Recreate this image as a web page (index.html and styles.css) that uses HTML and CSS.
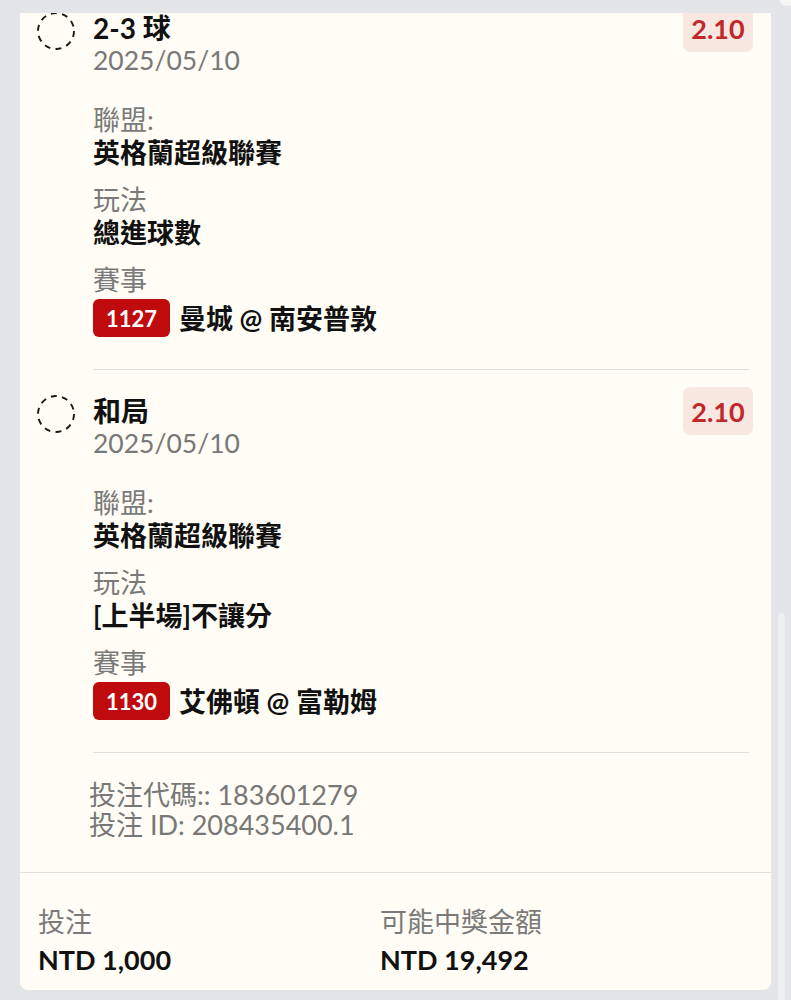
FILE: index.html
```html
<!DOCTYPE html>
<html lang="zh-Hant">
<head>
<meta charset="utf-8">
<title>投注單</title>
<link rel="stylesheet" href="styles.css">
</head>
<body>
<div class="page">
  <div class="card">
    <div class="list">
      <div class="item">
        <svg class="check" width="38" height="38" viewBox="0 0 38 38"><circle cx="19" cy="19" r="18" fill="none" stroke="#1a1a1a" stroke-width="1.9" stroke-dasharray="6 5.3"/></svg>
        <div class="head">
          <div class="title">2-3 球</div>
          <div class="date">2025/05/10</div>
        </div>
        <div class="odds">2.10</div>
        <div class="details">
          <div class="field"><div class="label">聯盟:</div><div class="value">英格蘭超級聯賽</div></div>
          <div class="field"><div class="label">玩法</div><div class="value">總進球數</div></div>
          <div class="field"><div class="label">賽事</div><div class="match"><span class="code">1127</span><span class="value">曼城 @ 南安普敦</span></div></div>
        </div>
      </div>
      <div class="item">
        <svg class="check" width="38" height="38" viewBox="0 0 38 38"><circle cx="19" cy="19" r="18" fill="none" stroke="#1a1a1a" stroke-width="1.9" stroke-dasharray="6 5.3"/></svg>
        <div class="head">
          <div class="title">和局</div>
          <div class="date">2025/05/10</div>
        </div>
        <div class="odds">2.10</div>
        <div class="details">
          <div class="field"><div class="label">聯盟:</div><div class="value">英格蘭超級聯賽</div></div>
          <div class="field"><div class="label">玩法</div><div class="value">[上半場]不讓分</div></div>
          <div class="field"><div class="label">賽事</div><div class="match"><span class="code">1130</span><span class="value">艾佛頓 @ 富勒姆</span></div></div>
        </div>
      </div>
    </div>
    <div class="meta">
      <div class="meta-line">投注代碼:: 183601279</div>
      <div class="meta-line">投注 ID: 208435400.1</div>
    </div>
    <div class="footer">
      <div class="sum">
        <div class="sum-label">投注</div>
        <div class="sum-value">NTD 1,000</div>
      </div>
      <div class="sum">
        <div class="sum-label">可能中獎金額</div>
        <div class="sum-value">NTD 19,492</div>
      </div>
    </div>
  </div>
  <div class="thumb-top"></div>
  <div class="thumb"></div>
</div>
</body>
</html>
```

FILE: styles.css
```css
html, body {
  margin: 0;
  padding: 0;
  background: #e4e5e8;
  height: 1000px;
  overflow: hidden;
}

.page {
  font-family: Lato, "Noto Sans CJK TC", sans-serif;
  font-size: 27px;
  color: #121212;
  padding-top: 13px;
  padding-left: 20px;
}

.card {
  width: 751px;
  background: #fffdf5;
  border-radius: 0 0 8px 8px;
  overflow: hidden;
}

.list {
  margin-top: -26px;
}

.item {
  display: grid;
  grid-template-columns: 38px 1fr auto;
  column-gap: 18px;
  padding: 17px 18px 0 17px;
}

.check {
  display: block;
  margin-top: 8px;
}

.head {
  padding-top: 9px;
}

.title {
  font-size: 28px;
  font-weight: 700;
  line-height: 31px;
  color: #111;
}

.date {
  font-size: 26.5px;
  line-height: 33px;
  color: #787878;
}

.odds {
  width: 70px;
  height: 48px;
  display: flex;
  align-items: center;
  justify-content: center;
  background: #f8e8e1;
  color: #c1272b;
  font-weight: 700;
  font-size: 27px;
  border-radius: 7px;
}

.details {
  grid-column: 2 / 4;
  margin-top: 26px;
  margin-right: 4px;
  padding-bottom: 32px;
  border-bottom: 1px solid #e3e1db;
  display: flex;
  flex-direction: column;
  gap: 14px;
}

.label {
  line-height: 33px;
  color: #7a7a7a;
}

.value {
  line-height: 33px;
  font-weight: 700;
  color: #111;
}

.match {
  display: flex;
  align-items: center;
  gap: 9px;
  margin-top: 3px;
}

.code {
  height: 38px;
  display: inline-flex;
  align-items: center;
  padding: 0 13px;
  background: #bf0b0d;
  color: #fff;
  border-radius: 6px;
  font-size: 22px;
  font-weight: 700;
}

.meta {
  padding: 27px 0 32px 69px;
  color: #777;
}

.meta-line {
  line-height: 30px;
}

.footer {
  display: grid;
  grid-template-columns: 342px 1fr;
  padding: 32px 18px 14px;
  border-top: 1px solid #e3e1db;
}

.sum-label {
  line-height: 33px;
  color: #7a7a7a;
}

.sum-value {
  margin-top: 5px;
  line-height: 33px;
  font-weight: 700;
  color: #111;
}

.thumb {
  position: fixed;
  left: 778px;
  top: 613px;
  width: 7px;
  height: 400px;
  background: #eef0f2;
  border-radius: 4px;
}

.thumb-top {
  position: fixed;
  left: 779px;
  top: -20px;
  width: 16px;
  height: 26px;
  background: #f6f6f4;
  border-radius: 8px;
}
```
